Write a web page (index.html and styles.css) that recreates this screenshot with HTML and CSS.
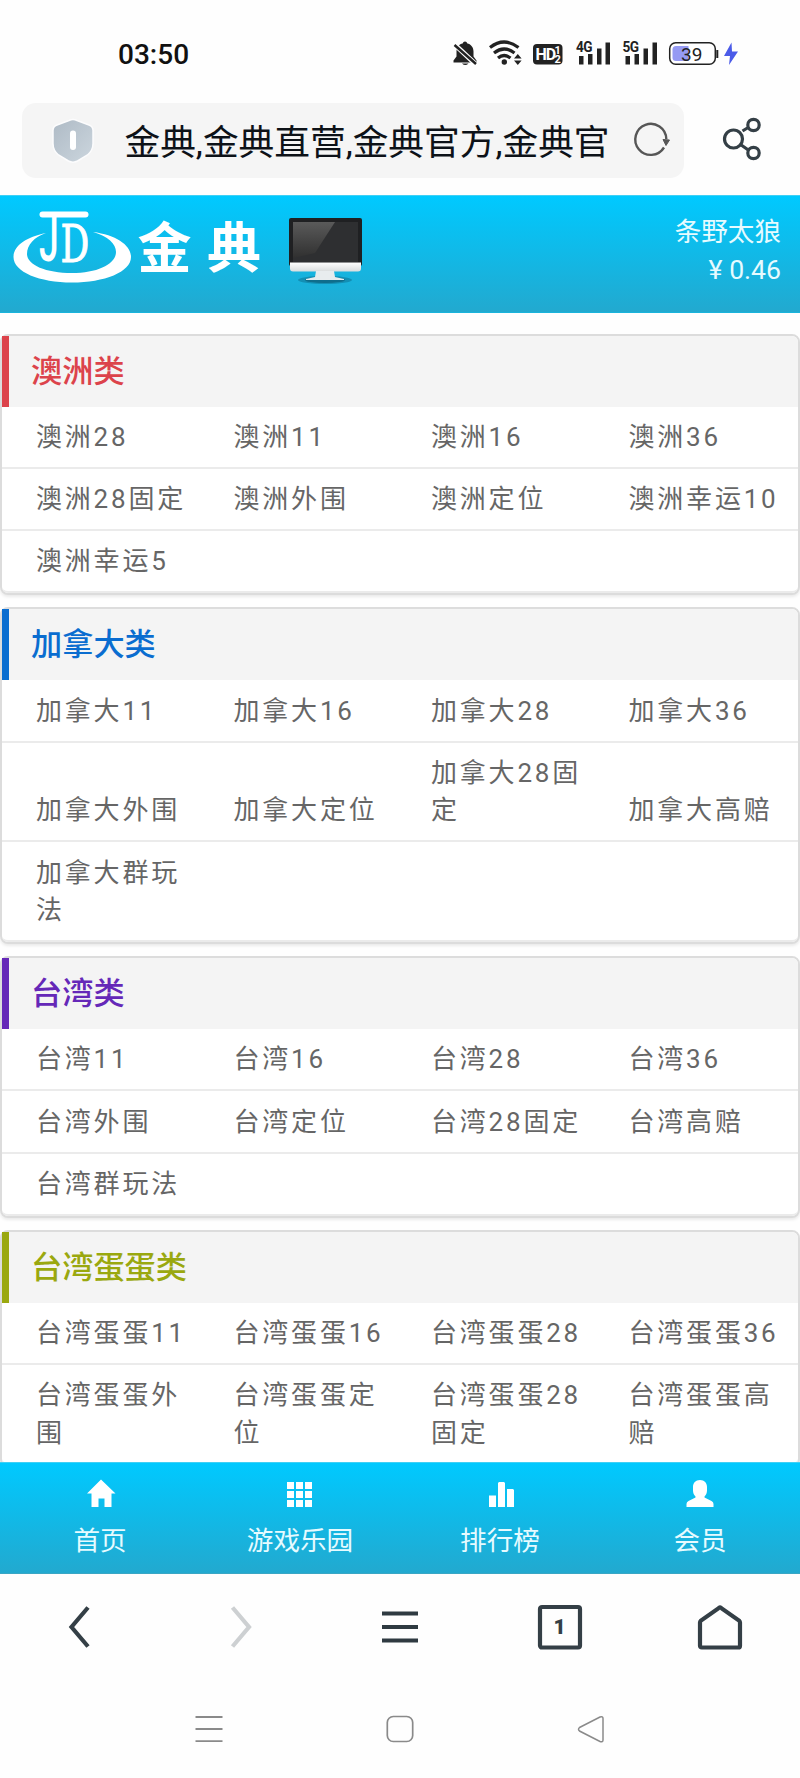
FILE: index.html
```html
<!DOCTYPE html>
<html lang="zh-CN">
<head>
    <meta charset="UTF-8">
    <meta name="viewport" content="width=device-width, initial-scale=1.0">
    <title>金典</title>
    <link rel="stylesheet" href="styles.css">
</head>
<body>
    <div class="status">
        <span class="time">03:50</span>
        <svg class="status-icons" width="290" height="34" viewBox="450 37 290 34">
            <!-- muted bell -->
            <path d="M465 41.500c1.200 0 2 .8 2 1.800 4 1 6.500 4 6.500 8.200v5l3 4v2h-23v-2l3-4v-5c0-4.200 2.500-7.200 6.500-8.200 0-1 .8-1.800 2-1.800z" fill="#222"/>
            <path d="M462 63.500h6.500q-3.200 3-6.500 0z" fill="#222"/>
            <path d="M453 43l23.500 22" stroke="#fff" stroke-width="5"/>
            <path d="M454.500 45l21.500 19" stroke="#222" stroke-width="2.500"/>
            <!-- wifi -->
            <g fill="none" stroke="#222" stroke-width="3.200">
                <path d="M490 47.500q14-11 28.500 0M494 53q10-8 20.500 0M498 58q6-5 12.500 0"/>
            </g>
            <circle cx="504.300" cy="62" r="2.700" fill="#222"/>
            <path d="M514 58.500l3.800-4.500 3.800 4.500zM514 60.500l3.800 4.500 3.800-4.500z" fill="#222"/>
            <!-- hd -->
            <rect x="533" y="44" width="29.500" height="20.500" rx="4" fill="#222"/>
            <text x="535.500" y="60" class="hd">HD</text>
            <text x="554.500" y="53.700" class="hd-num">1</text>
            <text x="554.500" y="62.500" class="hd-num">2</text>
            <!-- signal -->
            <g fill="#222">
                <path d="M579 56h4.500v8.500h-4.500zM588 54h4.500v10.500h-4.500zM597 48.500h4.500v16h-4.500zM605.500 42.500h4.500v22h-4.500z"/>
                <path d="M625.500 56h4.500v8.500h-4.500zM634.500 54h4.500v10.500h-4.500zM643.500 48.500h4.500v16h-4.500zM652.500 42.500h4.500v22h-4.500z"/>
            </g>
            <text transform="translate(576 52) scale(.88 1)" class="net">4G</text>
            <text transform="translate(622.500 52) scale(.88 1)" class="net">5G</text>
            <!-- battery -->
            <rect x="669.700" y="42.700" width="45.600" height="21.600" rx="6" fill="#fff" stroke="#222" stroke-width="1.500"/>
            <path d="M676 46h12.500v15h-12.500q-3.500 0-3.500-3.500v-8q0-3.500 3.500-3.500z" fill="#959af3"/>
            <path d="M717.300 50v8" stroke="#222" stroke-width="2"/>
            <text x="681" y="60.500" class="battery">39</text>
            <path d="M731.500 42.500l-7.500 13.500h6l-1 9 9-13.500h-6z" fill="#4b5be8"/>
        </svg>
    </div>

    <div class="address-row">
        <div class="address">
            <svg class="shield" width="44" height="46" viewBox="0 0 44 46">
                <defs>
                    <linearGradient id="shieldFill" x1="0" y1="0" x2="1" y2="1">
                        <stop offset="0" stop-color="#aebac5"/>
                        <stop offset="1" stop-color="#ccd6de"/>
                    </linearGradient>
                </defs>
                <path d="M22 1.500q2 0 4 1l12 4.500q4 1.500 4 5.500v13q0 7-5.500 11.500l-10 6q-4.500 2.500-9 0l-10-6q-5.500-4.500-5.500-11.500v-13q0-4 4-5.500l12-4.500q2-1 4-1z" fill="url(#shieldFill)" stroke="#fcfcfd" stroke-width="1.500"/>
                <rect x="19" y="12.500" width="6" height="19.500" rx="3" fill="#fff"/>
            </svg>
            <span class="page-title">金典,金典直营,金典官方,金典官</span>
            <svg class="reload" width="38" height="36" viewBox="0 0 38 36">
                <path d="M32 24.500a15.500 15.500 0 1 1 2.300-8.500" fill="none" stroke="#565656" stroke-width="2.400"/>
                <path d="M31 16.500l6.500.5-3.500 5.500z" fill="#565656" stroke="#565656" stroke-linejoin="round"/>
            </svg>
        </div>
        <svg class="share" width="40" height="44" viewBox="0 0 40 44">
            <g fill="none" stroke="#343f46" stroke-width="3.200">
                <circle cx="11.500" cy="22" r="9"/>
                <circle cx="31.500" cy="8" r="5.700"/>
                <circle cx="31.500" cy="36" r="5.700"/>
                <path d="M20.500 14l6.500-4M18.500 27.500l8.500 6"/>
            </g>
        </svg>
    </div>

    <header class="site-header">
        <svg class="logo" width="365" height="80" viewBox="0 0 365 80">
            <defs>
                <linearGradient id="screen" x1="0" y1="0" x2="0" y2="1">
                    <stop offset="0" stop-color="#5a5a5a"/>
                    <stop offset="1" stop-color="#303030"/>
                </linearGradient>
                <linearGradient id="stand" x1="0" y1="0" x2="0" y2="1">
                    <stop offset="0" stop-color="#fff"/>
                    <stop offset="1" stop-color="#d9dcdd"/>
                </linearGradient>
            </defs>
            <path d="M46 37C26 41 13.500 50 13.500 61c0 15 26 25.500 58.500 25.500s59-10.500 59-25.500c0-12-15-22-38-25 15 4 23 12 23 20 0 12-18 21-44 21s-45-8-45-19c0-9 7-17 19-21z" fill="#fff"/>
            <rect x="39.500" y="15.500" width="49" height="6" rx="3" fill="#fff"/>
            <text transform="translate(39 65) scale(.58 1)" class="mono-j">J</text>
            <text transform="translate(60.500 65.500) scale(.69 1)" class="mono-d">D</text>
            <text x="137.500" y="72" class="brand">金</text>
            <text x="207" y="72" class="brand">典</text>
            <!-- monitor -->
            <ellipse cx="325" cy="84" rx="27" ry="4" fill="#0d6b8c" opacity=".5"/>
            <ellipse cx="325" cy="84" rx="20" ry="3" fill="#0b4b63" opacity=".5"/>
            <rect x="289" y="22" width="73" height="48" rx="2" fill="#1f2022"/>
            <rect x="293" y="26" width="65" height="40" fill="#2e2f31"/>
            <path d="M293 26h42l-20 31-22 5z" fill="url(#screen)"/>
            <path d="M290 66.500h71v6q0 3-3 3h-65q-3 0-3-3z" fill="url(#stand)"/>
            <path d="M316 75h18l1 6 9 2v1h-38v-1l9-2z" fill="#e8ecee"/>
        </svg>
        <div class="account">
            <div>条野太狼</div>
            <div>¥ 0.46</div>
        </div>
    </header>

    <main class="games">
        <section class="card red">
            <h2>澳洲类</h2>
            <div class="row"><a>澳洲28</a><a>澳洲11</a><a>澳洲16</a><a>澳洲36</a></div>
            <div class="row"><a>澳洲28固定</a><a>澳洲外围</a><a>澳洲定位</a><a>澳洲幸运10</a></div>
            <div class="row"><a>澳洲幸运5</a></div>
        </section>
        <section class="card blue">
            <h2>加拿大类</h2>
            <div class="row"><a>加拿大11</a><a>加拿大16</a><a>加拿大28</a><a>加拿大36</a></div>
            <div class="row"><a>加拿大外围</a><a>加拿大定位</a><a>加拿大28固定</a><a>加拿大高赔</a></div>
            <div class="row"><a>加拿大群玩法</a></div>
        </section>
        <section class="card purple">
            <h2>台湾类</h2>
            <div class="row"><a>台湾11</a><a>台湾16</a><a>台湾28</a><a>台湾36</a></div>
            <div class="row"><a>台湾外围</a><a>台湾定位</a><a>台湾28固定</a><a>台湾高赔</a></div>
            <div class="row"><a>台湾群玩法</a></div>
        </section>
        <section class="card olive">
            <h2>台湾蛋蛋类</h2>
            <div class="row"><a>台湾蛋蛋11</a><a>台湾蛋蛋16</a><a>台湾蛋蛋28</a><a>台湾蛋蛋36</a></div>
            <div class="row"><a>台湾蛋蛋外围</a><a>台湾蛋蛋定位</a><a>台湾蛋蛋28固定</a><a>台湾蛋蛋高赔</a></div>
        </section>
    </main>

    <nav class="tabs">
        <a>
            <svg width="30" height="30" viewBox="0 0 30 30"><path d="M16 .5l14.500 14h-4v13.500h-7v-8.500h-6v8.500h-7v-13.500h-4.500z" fill="#fff"/></svg>
            首页
        </a>
        <a>
            <svg width="30" height="30" viewBox="0 0 30 30"><path d="M2 3h7v7h-7zM11 3h7v7h-7zM20 3h7v7h-7zM2 12h7v7h-7zM11 12h7v7h-7zM20 12h7v7h-7zM2 21h7v7h-7zM11 21h7v7h-7zM20 21h7v7h-7z" fill="#fff"/></svg>
            游戏乐园
        </a>
        <a>
            <svg width="30" height="30" viewBox="0 0 30 30"><path d="M4 16.500h7v11.500h-7zM13 4l1-1h5l1 1v24h-7zM22 10h6l1 1v17h-7z" fill="#fff"/></svg>
            排行榜
        </a>
        <a>
            <svg width="30" height="30" viewBox="0 0 30 30"><path d="M15 1c4.500 0 7 3 7 7v3.500c0 2.500-1 4.500-2.500 6v1l7 3.500q2 1 2 3v3h-27v-3q0-2 2-3l7-3.500v-1c-1.500-1.500-2.500-3.500-2.500-6v-3.500c0-4 2.500-7 7-7z" fill="#fff"/></svg>
            会员
        </a>
    </nav>

    <div class="toolbar">
        <svg width="50" height="50" viewBox="0 0 50 50"><path d="M33 5.500L16.500 25l16.500 19.500" fill="none" stroke="#343f46" stroke-width="4.200"/></svg>
        <svg width="50" height="50" viewBox="0 0 50 50"><path d="M17.500 5.500L34 25l-16.500 19.500" fill="none" stroke="#cdd0d2" stroke-width="4.200"/></svg>
        <svg width="50" height="50" viewBox="0 0 50 50"><path d="M7 11.500h36M7 25h36M7 38.500h36" stroke="#2f3a41" stroke-width="4.200"/></svg>
        <svg width="50" height="50" viewBox="0 0 50 50">
            <rect x="5" y="5" width="40" height="40.500" rx="2" fill="none" stroke="#343f46" stroke-width="4.200"/>
            <text x="24.500" y="32" text-anchor="middle" class="tab-count">1</text>
        </svg>
        <svg width="50" height="50" viewBox="0 0 50 50"><path d="M5 20.500q0-1 1-2L24 6q1-1 2 0l18 12.500q1 1 1 2v23.200q0 1.800-1.800 1.800h-36.400q-1.800 0-1.800-1.800z" fill="none" stroke="#343f46" stroke-width="4.200"/></svg>
    </div>

    <div class="system-nav">
        <svg width="30" height="30" viewBox="0 0 30 30"><path d="M1.500 3h27M1.500 15h27M1.500 27.200h27" stroke="#8a8a8a" stroke-width="1.800"/></svg>
        <svg width="30" height="30" viewBox="0 0 30 30"><rect x="2.300" y="2.500" width="25.400" height="25" rx="6" fill="none" stroke="#8a8a8a" stroke-width="1.700"/></svg>
        <svg width="30" height="30" viewBox="0 0 30 30"><path d="M3.500 13.500L24 3q3-1 3 1.500v21.500q0 2.500-3 1.500L3.500 17q-2-1.700 0-3.500z" fill="none" stroke="#8a8a8a" stroke-width="1.500"/></svg>
    </div>
</body>
</html>
```
FILE: styles.css
```css
* {
    box-sizing: border-box;
}
body {
    margin: 0;
    width: 800px;
    height: 1778px;
    overflow: hidden;
    display: flex;
    flex-direction: column;
    background-color: #fefefe;
    font-family: Roboto, "Noto Sans CJK SC", sans-serif;
}
svg {
    display: block;
    flex-shrink: 0;
    overflow: visible;
}

/* phone status bar */
.status {
    height: 103px;
    padding: 37px 60px 0 118px;
    display: flex;
    justify-content: space-between;
}
.time {
    font-size: 28px;
    font-weight: 500;
    line-height: 35px;
    color: #111;
}
.hd {
    font-size: 16px;
    font-weight: 700;
    letter-spacing: -1px;
    fill: #fff;
}
.hd-num {
    font-size: 11px;
    font-weight: 700;
    fill: #fff;
}
.net {
    font-size: 15.500px;
    font-weight: 700;
    letter-spacing: -0.500px;
    fill: #222;
    stroke: #fff;
    stroke-width: 2px;
    paint-order: stroke;
}
.battery {
    font-size: 19px;
    fill: #222;
}

/* address bar */
.address-row {
    height: 92px;
    padding-left: 22px;
    display: flex;
    align-items: flex-start;
}
.address {
    width: 662px;
    height: 75px;
    padding-left: 29px;
    display: flex;
    align-items: center;
    background-color: #f5f5f5;
    border-radius: 14px;
}
.page-title {
    width: 507px;
    margin-left: 29.500px;
    font-size: 35.700px;
    line-height: 75px;
    padding-top: 5px;
    white-space: nowrap;
    color: #0d1218;
}
.share {
    margin: 14px 0 0 38px;
}

/* site header */
.site-header {
    height: 118px;
    padding: 17px 19px 0 0;
    display: flex;
    justify-content: space-between;
    background: linear-gradient(#00c9ff, #22a9cf);
    border-top: 1px solid #3fd0f5;
    border-bottom: 1px solid #1ab4dc;
    color: #e6fbff;
}
.logo {
    margin-top: -17px;
}
.mono-j {
    font-size: 61px;
    font-weight: 500;
    fill: #fff;
}
.mono-d {
    font-family: "DejaVu Serif", serif;
    font-size: 52px;
    fill: #fff;
    stroke: #fff;
    stroke-width: 1px;
}
.brand {
    font-size: 54px;
    font-weight: 700;
    fill: #fff;
}
.account {
    text-align: right;
    font-size: 26.600px;
    line-height: 38px;
}

/* game lists */
.games {
    height: 1149px;
    padding-top: 20.500px;
    overflow: hidden;
}
.card {
    margin-bottom: 12px;
    border: 2px solid #dcdcdc;
    border-radius: 8px;
    background-color: #fff;
    box-shadow: 0 2px 3px rgba(0, 0, 0, 0.08);
}
.card h2 {
    margin: 0;
    height: 71px;
    padding-left: 22px;
    border-left: 7px solid;
    border-radius: 0 6px 0 0;
    background-color: #f4f4f4;
    font-size: 31.200px;
    font-weight: 500;
    line-height: 72px;
}
.red h2 {
    color: #dc434b;
}
.blue h2 {
    color: #0a6dd0;
}
.purple h2 {
    color: #6528b8;
}
.olive h2 {
    color: #9aa80f;
}
.row {
    display: grid;
    grid-template-columns: repeat(4, 197.500px);
    align-items: end;
    padding: 12.250px 0 10.500px;
    border-bottom: 2px solid #ebebeb;
}
.row:last-child {
    border-radius: 0 0 6px 6px;
}
.row a {
    padding: 0 2px 0 34px;
    font-size: 26px;
    line-height: 37.500px;
    letter-spacing: 2.800px;
    color: #666;
}

/* site tabs */
.tabs {
    height: 112px;
    display: grid;
    grid-template-columns: repeat(4, 1fr);
    background: linear-gradient(#00c9ff, #22a9cf);
    border-top: 1px solid #3fd0f5;
    border-bottom: 1px solid #3aa6c4;
    color: #e6fbff;
}
.tabs a {
    padding-top: 16px;
    display: flex;
    flex-direction: column;
    align-items: center;
    gap: 13px;
    font-size: 26.600px;
    line-height: 38px;
}

/* browser toolbar and phone navigation */
.toolbar {
    height: 106px;
    display: grid;
    grid-template-columns: repeat(5, 1fr);
    align-items: center;
    justify-items: center;
}
.tab-count {
    font-size: 21px;
    font-weight: 900;
    fill: #343f46;
}
.system-nav {
    height: 98px;
    padding: 0 113px;
    display: grid;
    grid-template-columns: repeat(3, 1fr);
    align-items: center;
    justify-items: center;
}
```
